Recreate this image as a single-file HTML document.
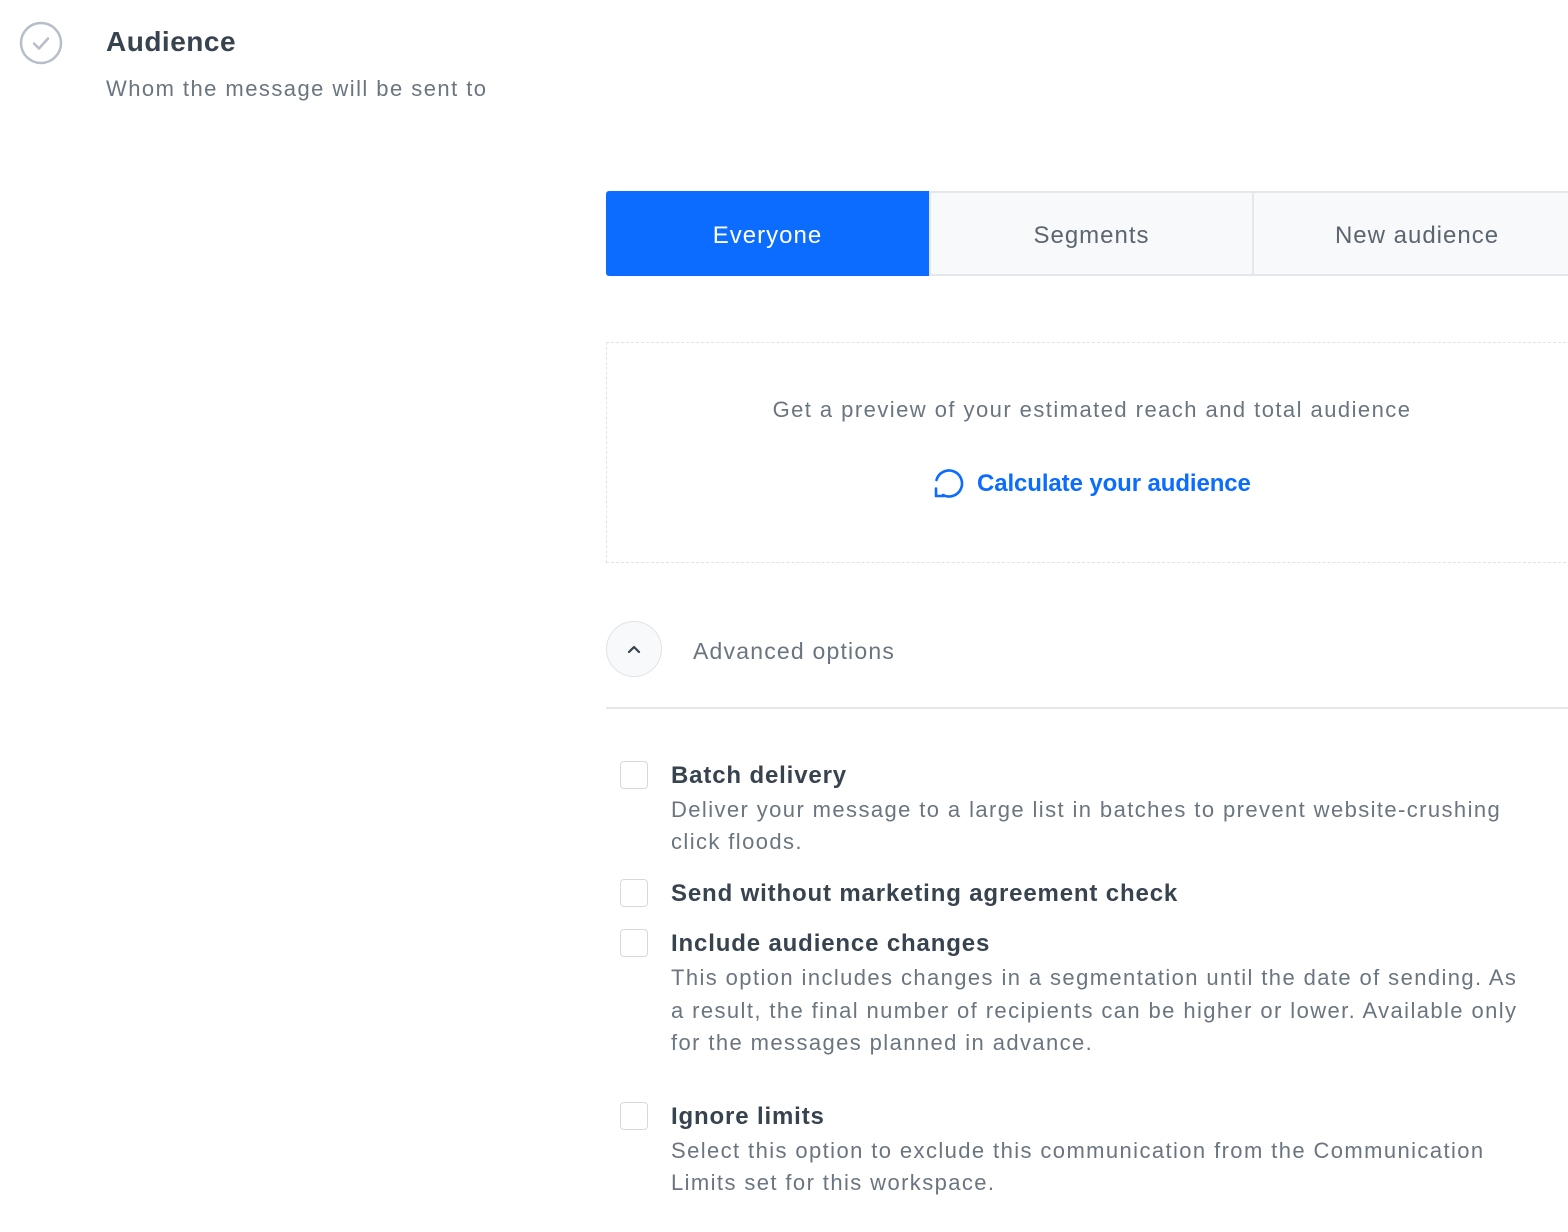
<!DOCTYPE html>
<html><head><meta charset="utf-8"><style>
body{margin:0;width:1568px;height:1232px;overflow:hidden;background:#fff;font-family:"Liberation Sans",sans-serif;position:relative}
.a{position:absolute;white-space:nowrap}
.tab{position:absolute;top:191px;height:85px;line-height:85px;text-align:center;font-size:24px;box-sizing:border-box;letter-spacing:1px}
.cb{position:absolute;left:620px;width:28px;height:28px;border:1px solid #d5d9dd;border-radius:4px;box-sizing:border-box}
.h{font-size:24px;color:#384350;font-weight:bold;letter-spacing:0.85px}
.d{font-size:22px;color:#6a7580;letter-spacing:1.4px}
</style></head><body>
<svg class="a" style="left:19px;top:21px" width="44" height="44" viewBox="0 0 44 44"><circle cx="22" cy="22" r="20" fill="none" stroke="#b6bec7" stroke-width="2.5"/><path d="M15 22.5l5 5 9-10" fill="none" stroke="#b6bec7" stroke-width="2.5" stroke-linecap="round" stroke-linejoin="round"/></svg>
<div class="a" style="left:106px;top:26px;font-size:28px;color:#384350;font-weight:bold;letter-spacing:0.5px">Audience</div>
<div class="a" style="left:106px;top:76px;font-size:22px;color:#6a7580;letter-spacing:1.45px">Whom the message will be sent to</div>
<div class="tab" style="left:606px;width:323px;background:#0b6cff;color:#fff;border-radius:3px 0 0 3px;line-height:89px">Everyone</div>
<div class="tab" style="left:929px;width:325px;background:#f7f9fb;color:#5c6670;border:2px solid #e4e8ec">Segments</div>
<div class="tab" style="left:1252px;width:330px;background:#f7f9fb;color:#5c6670;border:2px solid #e4e8ec">New audience</div>
<div class="a" style="left:606px;top:342px;width:980px;height:221px;border:1px dashed #dfe3e7;box-sizing:border-box"></div>
<div class="a" style="left:606px;width:972px;top:397px;text-align:center;font-size:22px;color:#6a7580;letter-spacing:1.45px">Get a preview of your estimated reach and total audience</div>
<svg class="a" style="left:932px;top:468px" width="34" height="34" viewBox="0 0 34 34"><path d="M4.5 12A13 13 0 1 1 11 27" fill="none" stroke="#0b6cff" stroke-width="2.6" stroke-linecap="round"/><path d="M4 20.5L4 28 11.5 28" fill="none" stroke="#0b6cff" stroke-width="2.6" stroke-linecap="round" stroke-linejoin="round"/></svg>
<div class="a" style="left:977px;top:470px;font-size:24px;color:#0b6cff;font-weight:bold;letter-spacing:-0.1px">Calculate your audience</div>
<div class="a" style="left:606px;top:621px;width:56px;height:56px;border:1.5px solid #dfe3e7;border-radius:50%;background:#f7f9fb;box-sizing:border-box"></div>
<svg class="a" style="left:626px;top:642px" width="16" height="14" viewBox="0 0 16 14"><path d="M3 10l5-5 5 5" fill="none" stroke="#384350" stroke-width="2.2" stroke-linecap="round" stroke-linejoin="round"/></svg>
<div class="a" style="left:693px;top:638px;font-size:23px;color:#6a7580;letter-spacing:1.2px">Advanced options</div>
<div class="a" style="left:606px;top:707px;width:962px;height:1.5px;background:#e4e8ec"></div>
<div class="cb" style="top:761px"></div>
<div class="a h" style="left:671px;top:762px">Batch delivery</div>
<div class="a d" style="left:671px;top:794px;line-height:32px">Deliver your message to a large list in batches to prevent website-crushing<br>click floods.</div>
<div class="cb" style="top:879px"></div>
<div class="a h" style="left:671px;top:880px">Send without marketing agreement check</div>
<div class="cb" style="top:929px"></div>
<div class="a h" style="left:671px;top:930px">Include audience changes</div>
<div class="a d" style="left:671px;top:962px;line-height:32.5px">This option includes changes in a segmentation until the date of sending. As<br>a result, the final number of recipients can be higher or lower. Available only<br>for the messages planned in advance.</div>
<div class="cb" style="top:1102px"></div>
<div class="a h" style="left:671px;top:1103px">Ignore limits</div>
<div class="a d" style="left:671px;top:1135px;line-height:32px">Select this option to exclude this communication from the Communication<br>Limits set for this workspace.</div>
</body></html>
